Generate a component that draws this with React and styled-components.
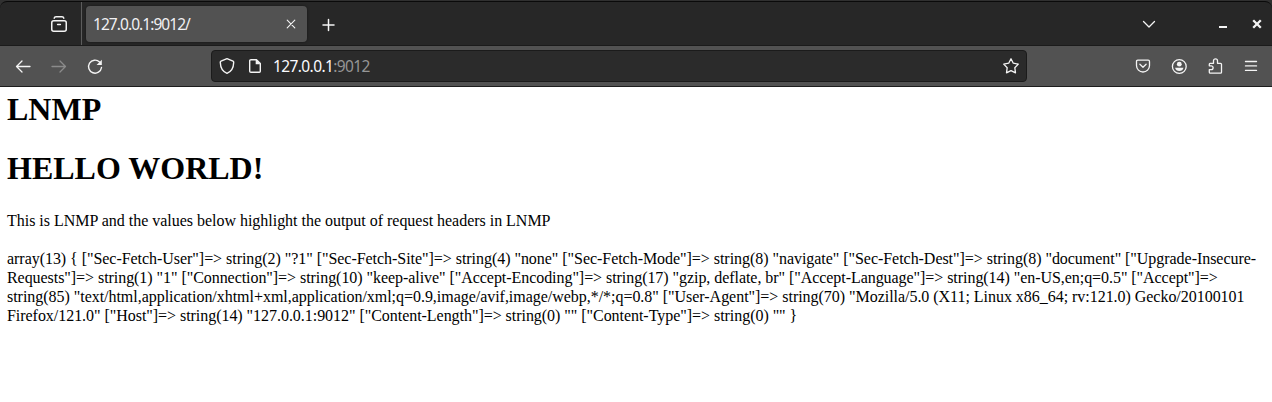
import React from 'react';
import styled, { createGlobalStyle } from 'styled-components';

const GlobalStyle = createGlobalStyle`
  *, *::before, *::after { box-sizing: border-box; }
  body { margin: 0; background: #fff; }
`;

const Window = styled.div`
  width: 1272px;
  height: 402px;
  overflow: hidden;
  background: #fff;
  font-family: 'Noto Sans', 'Open Sans', sans-serif;
`;

const Frame = styled.header`
  height: 46px;
  background: #303030;
  padding-top: 1px;
`;

const TabStrip = styled.div`
  display: flex;
  height: 45px;
  background: #272727;
  border-top: 1px solid #0a0a0a;
  border-bottom: 1px solid #1b1b1b;
  border-radius: 7px 7px 0 0;
`;

const ViewArea = styled.div`
  width: 82px;
  padding-left: 41px;
  border-right: 1px solid #5c5c5c;
`;

const Slot = styled.span`
  display: flex;
  flex: none;
  align-items: center;
  justify-content: center;
  width: ${(p) => p.$w || 36}px;
  height: ${(p) => p.$h || 40}px;
  color: ${(p) => p.$color || '#f4f4f4'};
`;

const Tab = styled.div`
  display: flex;
  align-items: center;
  justify-content: space-between;
  width: 221px;
  height: 36px;
  margin: 4px 3px 0 4px;
  padding-left: 7px;
  border-radius: 4px;
  background: #525252;
  box-shadow: 0 0 3px rgba(0, 0, 0, 0.45);
`;

const TabTitle = styled.span`
  color: #f0f0f2;
  font-size: 15.5px;
  letter-spacing: -0.94px;
  line-height: 20px;
  white-space: nowrap;
`;

const WindowControls = styled.div`
  display: flex;
  margin-left: auto;
`;

const Toolbar = styled.nav`
  display: flex;
  height: 41px;
  padding: 0 3px 0 5px;
  background: #525252;
  border-bottom: 1px solid #1d1d1d;
`;

const AddressBar = styled.div`
  display: flex;
  align-items: center;
  width: 816px;
  height: 32px;
  margin: 4px 98px 0;
  padding-left: 1px;
  border: 1px solid #1b1b1b;
  border-radius: 4px;
  background: #2b2b2b;
`;

const Address = styled.span`
  flex: 1;
  padding-left: 4px;
  color: #fbfbfe;
  font-size: 15.5px;
  letter-spacing: -0.6px;
  line-height: 20px;
  white-space: nowrap;
`;

const Port = styled.span`
  color: #969696;
`;

const Page = styled.main`
  padding: 3px 7px 0;
  color: #000;
  font-family: 'Liberation Serif', 'Times New Roman', serif;
`;

const Heading = styled.h1`
  margin: 0 0 21px;
  font-size: 32px;
  line-height: 38px;
  font-weight: 700;
`;

const Text = styled.p`
  margin: ${(p) => p.$top || 0}px 0 19px;
  font-size: 16px;
  line-height: 19px;
`;

const Line = styled.span`
  display: block;
  white-space: pre;
  font-variant-ligatures: common-ligatures;
  letter-spacing: ${(p) => p.$tracking}px;
`;

const Svg = styled.svg`
  display: block;
  overflow: visible;
  fill: none;
  stroke: currentColor;
  stroke-width: ${(p) => p.$sw || 1.3};
  stroke-linecap: ${(p) => p.$cap || 'round'};
  stroke-linejoin: round;
`;

const Icon = ({ sw, cap, children }) => (
  <Svg width="16" height="16" viewBox="0 0 16 16" $sw={sw} $cap={cap} aria-hidden="true">
    {children}
  </Svg>
);

const DUMP = [
  [-0.043, 'array(13) { ["Sec-Fetch-User"]=> string(2) "?1" ["Sec-Fetch-Site"]=> string(4) "none" ["Sec-Fetch-Mode"]=> string(8) "navigate" ["Sec-Fetch-Dest"]=> string(8) "document" ["Upgrade-Insecure-'],
  [-0.054, 'Requests"]=> string(1) "1" ["Connection"]=> string(10) "keep-alive" ["Accept-Encoding"]=> string(17) "gzip, deflate, br" ["Accept-Language"]=> string(14) "en-US,en;q=0.5" ["Accept"]=>'],
  [-0.034, 'string(85) "text/html,application/xhtml+xml,application/xml;q=0.9,image/avif,image/webp,*/*;q=0.8" ["User-Agent"]=> string(70) "Mozilla/5.0 (X11; Linux x86_64; rv:121.0) Gecko/20100101'],
  [-0.042, 'Firefox/121.0" ["Host"]=> string(14) "127.0.0.1:9012" ["Content-Length"]=> string(0) "" ["Content-Type"]=> string(0) "" }'],
];

export default function App() {
  return (
    <Window>
      <GlobalStyle />
      <Frame>
        <TabStrip>
          <ViewArea>
            <Slot $h={44}>
              <Icon sw={1.5}>
                <rect x="0.75" y="4.8" width="14.5" height="10.4" rx="2" />
                <path d="M3.2 2.2Q3.5.7 5 .7H11Q12.5.7 12.8 2.2M6.6 8.4H9.4" />
              </Icon>
            </Slot>
          </ViewArea>
          <Tab>
            <TabTitle>127.0.0.1:9012/</TabTitle>
            <Slot $w={32} $h={36}>
              <Icon sw={1.1}><path d="M4.2 4.2 11.8 11.8M11.8 4.2 4.2 11.8" /></Icon>
            </Slot>
          </Tab>
          <Slot $h={45}>
            <Icon sw={1.5}><path d="M8.5 2.5V13.5M3 8H14" /></Icon>
          </Slot>
          <WindowControls>
            <Slot $w={110} $h={43}><Icon><path d="M2.5 5.5 8 11 13.5 5.5" /></Icon></Slot>
            <Slot $w={38} $h={44}><Icon sw={2} cap="butt"><path d="M4 11H12" /></Icon></Slot>
            <Slot $w={30} $h={44}>
              <Icon sw={2.3} cap="butt"><path d="M4.2 4.2 11.8 11.8M11.8 4.2 4.2 11.8" /></Icon>
            </Slot>
          </WindowControls>
        </TabStrip>
      </Frame>
      <Toolbar>
        <Slot><Icon><path d="M15 8.5H1.5M7 3 1.5 8.5 7 14" /></Icon></Slot>
        <Slot $color="#8b8b8b"><Icon><path d="M1 8.5H14.5M9 3 14.5 8.5 9 14" /></Icon></Slot>
        <Slot>
          <Icon sw={1.4}>
            <path d="M12.6 4A6.5 6.5 0 1 0 14.5 9.5" />
            <path d="M14.8 1.8V7H9.6Z" fill="currentColor" stroke="none" />
          </Icon>
        </Slot>
        <AddressBar>
          <Slot $w={28} $h={30}>
            <Icon sw={1.4}>
              <path d="M8 .7 14 3.2Q14.8 3.6 14.7 4.5C14.5 10 12.3 13.7 8 15.3C3.7 13.7 1.5 10 1.3 4.5Q1.2 3.6 2 3.2Z" />
            </Icon>
          </Slot>
          <Slot $w={28} $h={30}>
            <Icon sw={1.4}>
              <path d="M4 1.7H9.5L13.3 5.5V13.3Q13.3 14.3 12.3 14.3H4Q2.7 14.3 2.7 13.3V2.7Q2.7 1.7 4 1.7Z" />
              <path d="M8.7 1.5V6.3H13.5L9.5 1.5Z" fill="currentColor" stroke="none" />
            </Icon>
          </Slot>
          <Address>127.0.0.1<Port>:9012</Port></Address>
          <Slot $w={30} $h={30}>
            <Icon sw={1.3}>
              <path d="M8 .8 10.3 5.2 15.3 6.1 11.8 9.7 12.5 14.8 8 12.6 3.5 14.8 4.2 9.7 .7 6.1 5.7 5.2Z" />
            </Icon>
          </Slot>
        </AddressBar>
        <Slot>
          <Icon sw={1.3}>
            <path d="M2.8 2.2H13.2Q14.5 2.2 14.5 3.5V7.5A6.5 6.5 0 0 1 1.5 7.5V3.5Q1.5 2.2 2.8 2.2ZM4.9 6.2 8 9.2 11.1 6.2" />
          </Icon>
        </Slot>
        <Slot>
          <Icon sw={1.3}>
            <circle cx="8.3" cy="8.5" r="6.9" />
            <circle cx="8.3" cy="6.2" r="2.4" fill="currentColor" stroke="none" />
            <path d="M4.1 9.8H12.5Q11.6 13 8.3 13Q5 13 4.1 9.8Z" fill="currentColor" stroke="none" />
          </Icon>
        </Slot>
        <Slot>
          <Icon sw={1.3}>
            <path d="M3 5.3H6.5V2.8A2 2 0 0 1 10.5 2.8V5.3H13.5Q14.5 5.3 14.5 6.3V14.2Q14.5 15.2 13.5 15.2H3.3Q2.3 15.2 2.3 14.2V11.6H4.2A1.9 1.9 0 0 0 4.2 7.8H2.3V6.3Q2.3 5.3 3 5.3Z" />
          </Icon>
        </Slot>
        <Slot>
          <Icon sw={1.35}><path d="M2.5 3.5H13.5M2.5 7.9H13.5M2.5 12.4H13.5" /></Icon>
        </Slot>
      </Toolbar>
      <Page>
        <Heading>LNMP</Heading>
        <Heading>HELLO WORLD!</Heading>
        <Text $top={24}>
          <Line $tracking={-0.02}>
            This is LNMP and the values below highlight the output of request headers in LNMP
          </Line>
        </Text>
        <Text>
          {DUMP.map(([tracking, text]) => (
            <Line key={text} $tracking={tracking}>{text}</Line>
          ))}
        </Text>
      </Page>
    </Window>
  );
}
